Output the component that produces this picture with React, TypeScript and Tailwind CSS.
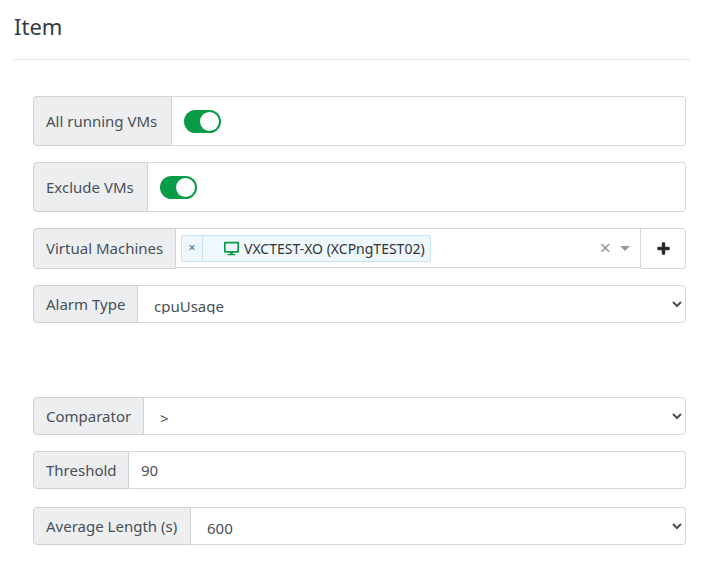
import { FaDesktop, FaPlus } from "react-icons/fa";

const addonClass =
  "flex shrink-0 items-center rounded-l-[4px] border border-[#cfd2d5] bg-[#eceef0] pl-3 text-[#495057]";

function Toggle() {
  return (
    <span className="flex h-[23px] w-[37px] items-center justify-end rounded-full bg-[#0a9b48] pr-[2px]">
      <span className="h-[19px] w-[19px] rounded-full bg-white" />
    </span>
  );
}

function ToggleRow({ label, width }: { label: string; width: string }) {
  return (
    <div className="flex h-[50px]">
      <span className={`${addonClass} ${width}`}>{label}</span>
      <div className="flex flex-1 items-center rounded-r-[4px] border border-l-0 border-[#d5d8db] pl-3">
        <Toggle />
      </div>
    </div>
  );
}

function SelectRow({ label, value, width }: { label: string; value: string; width: string }) {
  return (
    <div className="flex h-[38px]">
      <span className={`${addonClass} ${width}`}>{label}</span>
      <select
        defaultValue={value}
        className="h-full min-w-0 flex-1 rounded-r-[4px] border border-l-0 border-[#d5d8db] bg-white px-3 pt-[9px] pb-[8px] text-[#495057]"
      >
        <option>{value}</option>
      </select>
    </div>
  );
}

export default function App() {
  return (
    <div className="min-h-[565px] bg-white px-[13px] text-[15px] font-['Noto_Sans','Open_Sans',sans-serif]">
      <h2 className="border-b border-[#e5e5e5] pt-[10px] pb-[16px] indent-[1px] text-[22px] leading-[33px] text-[#343a40]">Item</h2>
      <div className="flex flex-col pt-[36px] pr-[4px] pl-[20px]">
        <ToggleRow label="All running VMs" width="w-[139px]" />
        <div className="mt-4">
          <ToggleRow label="Exclude VMs" width="w-[115px]" />
        </div>
        <div className="mt-4 flex h-[41px]">
          <span className={`${addonClass} w-[143px]`}>Virtual Machines</span>
          <div className="flex h-[40px] min-w-0 flex-1 items-center border border-l-0 border-[#d5d8db] pl-[5px]">
            <div className="flex h-[27px] items-center rounded-[2px] border border-[#c7e3f5] bg-[#eef8fd] text-[14px] text-[#333333]">
              <span className="flex h-full w-[21px] items-center justify-center border-r border-[#c7e3f5] text-[13px] text-[#3a6ea5]">×</span>
              <span className="flex items-center gap-[5px] pr-[5px] pl-[21px]">
                <FaDesktop className="text-[15px] text-[#0a9b48]" />
                VXCTEST-XO (XCPngTEST02)
              </span>
            </div>
            <span className="ml-auto text-[20px] leading-none text-[#999999]">×</span>
            <span className="mr-[10px] ml-[9px] h-0 w-0 border-x-[5px] border-t-[5px] border-x-transparent border-t-[#999999]" />
          </div>
          <button className="flex w-[45px] items-center justify-center rounded-r-[4px] border border-l-0 border-[#d5d8db] bg-white text-[#212529]">
            <FaPlus className="text-[13px]" stroke="currentColor" strokeWidth={40} />
          </button>
        </div>
        <div className="mt-4">
          <SelectRow label="Alarm Type" value="cpuUsage" width="w-[105px]" />
        </div>
        <div className="mt-[74px]">
          <SelectRow label="Comparator" value=">" width="w-[111px]" />
        </div>
        <div className="mt-4 flex h-[38px]">
          <span className={`${addonClass} w-[96px]`}>Threshold</span>
          <input
            defaultValue="90"
            className="min-w-0 flex-1 rounded-r-[4px] border border-l-0 border-[#d5d8db] bg-white px-3 text-[#495057]"
          />
        </div>
        <div className="mt-[18px]">
          <SelectRow label="Average Length (s)" value="600" width="w-[158px]" />
        </div>
      </div>
    </div>
  );
}
